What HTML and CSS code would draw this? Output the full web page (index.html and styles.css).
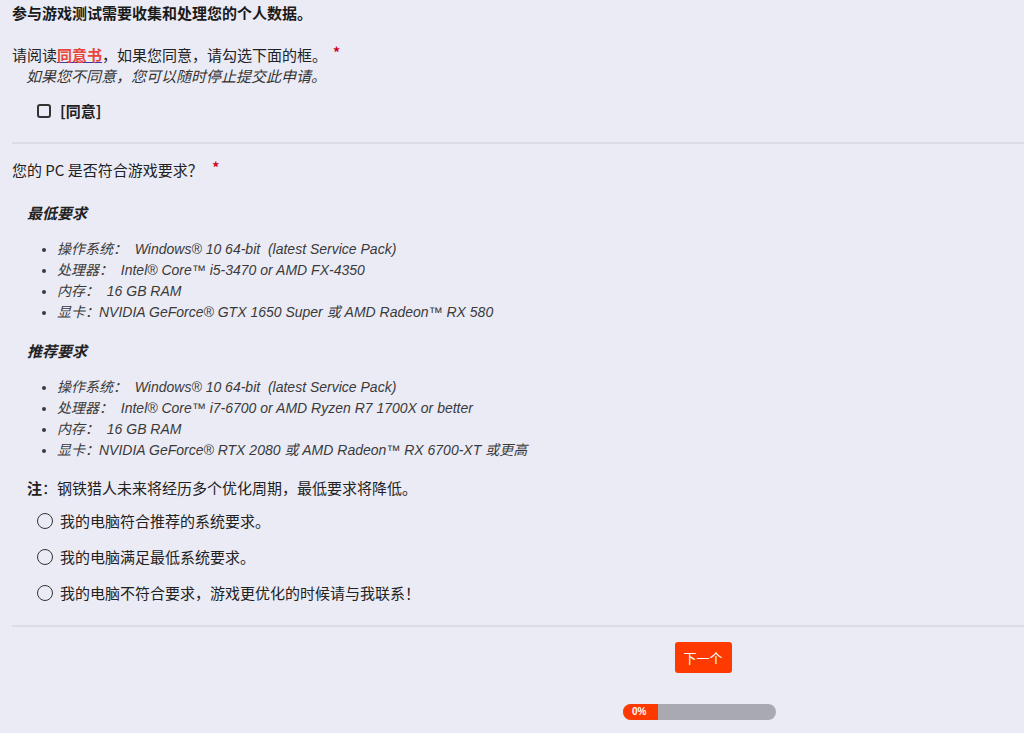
FILE: index.html
```html
<!DOCTYPE html>
<html lang="zh-CN">
  <head>
    <meta charset="UTF-8">
    <title>游戏测试申请</title>
    <link rel="stylesheet" href="styles.css">
  </head>
  <body>
    <div class="section">
      <h2 class="title">参与游戏测试需要收集和处理您的个人数据。</h2>

      <p class="question">请阅读<a href="#" class="consent-link">同意书</a>，如果您同意，请勾选下面的框。<span class="req">*</span></p>
      <p class="hint">如果您不同意，您可以随时停止提交此申请。</p>

      <label class="check-row">
        <span class="box"></span>
        <span class="check-label">[同意]</span>
      </label>
    </div>

    <div class="section">
      <p class="question q2">您的 PC 是否符合游戏要求？ <span class="req">*</span></p>

      <div class="specs">
        <h3>最低要求</h3>
        <ul>
          <li>操作系统：&nbsp; Windows® 10 64-bit &nbsp;(latest Service Pack)</li>
          <li>处理器：&nbsp; Intel® Core™ i5-3470 or AMD FX-4350</li>
          <li>内存：&nbsp; 16 GB RAM</li>
          <li>显卡：NVIDIA GeForce® GTX 1650 Super 或 AMD Radeon™ RX 580</li>
        </ul>

        <h3 class="rec">推荐要求</h3>
        <ul>
          <li>操作系统：&nbsp; Windows® 10 64-bit &nbsp;(latest Service Pack)</li>
          <li>处理器：&nbsp; Intel® Core™ i7-6700 or AMD Ryzen R7 1700X or better</li>
          <li>内存：&nbsp; 16 GB RAM</li>
          <li>显卡：NVIDIA GeForce® RTX 2080 或 AMD Radeon™ RX 6700-XT 或更高</li>
        </ul>

        <p class="note"><strong>注</strong>：钢铁猎人未来将经历多个优化周期，最低要求将降低。</p>
      </div>

      <div class="options">
        <label class="radio-row"><span class="circle"></span>我的电脑符合推荐的系统要求。</label>
        <label class="radio-row"><span class="circle"></span>我的电脑满足最低系统要求。</label>
        <label class="radio-row"><span class="circle"></span>我的电脑不符合要求，游戏更优化的时候请与我联系！</label>
      </div>
    </div>

    <div class="footer">
      <button class="next-btn">下一个</button>
      <div class="progress">
        <div class="progress-fill">0%</div>
      </div>
    </div>
  </body>
</html>
```

FILE: styles.css
```css
body {
  margin: 0;
  padding: 0 0 0 12px;
  background-color: #ebebf5;
  color: #222;
  font-family: "Noto Sans CJK SC", "Liberation Sans", sans-serif;
  font-size: 15px;
}
.section {
  border-bottom: 2px solid #dcdce6;
}
.title {
  margin: 0;
  padding-top: 2px;
  font-size: 15px;
  line-height: 22px;
  font-weight: bold;
  color: #1a1a1a;
}
.question {
  margin: 20px 0 0;
  line-height: 22px;
}
.q2 {
  margin-top: 15px;
}
.consent-link {
  color: #e8453c;
  font-weight: bold;
  text-decoration: underline;
  text-decoration-color: #3a3aa8;
}
.req {
  color: #d0021b;
  margin-left: 6px;
  font-size: 14px;
  font-weight: bold;
  position: relative;
  top: -3px;
}
.hint {
  margin: 0;
  padding-left: 14px;
  font-style: italic;
  line-height: 20px;
  color: #333;
}
.check-row {
  display: flex;
  align-items: center;
  gap: 9px;
  height: 22px;
  margin: 13px 0 0 25px;
  padding-bottom: 21px;
}
.box {
  width: 10px;
  height: 10px;
  margin-top: 2px;
  border: 2px solid #333;
  border-radius: 3px;
}
.check-label {
  font-weight: bold;
}
.specs {
  padding-left: 15px;
}
.specs h3 {
  margin: 21px 0 0;
  font-size: 15px;
  font-style: italic;
  font-weight: bold;
  line-height: 22px;
}
.specs .rec {
  margin-top: 17px;
}
.specs ul {
  margin: 15px 0 0;
  padding-left: 30px;
  font-style: italic;
  color: #3a3a3a;
  font-family: "Liberation Sans", "Noto Sans CJK SC", sans-serif;
  font-size: 14px;
}
.specs li {
  line-height: 21px;
}
.note {
  margin: 16px 0 0;
  line-height: 22px;
}
.options {
  display: flex;
  flex-direction: column;
  gap: 14px;
  margin: 10px 0 0 25px;
  padding-bottom: 22px;
}
.radio-row {
  display: flex;
  align-items: center;
  gap: 7px;
  height: 22px;
}
.circle {
  flex: none;
  width: 14px;
  height: 14px;
  margin-top: 2px;
  border: 1.5px solid #333;
  border-radius: 50%;
}
.footer {
  display: flex;
  flex-direction: column;
  align-items: center;
  padding: 15px 0 0 0;
}
.next-btn {
  margin-left: 370px;
  background-color: #ff3a00;
  color: #fff;
  border: none;
  border-radius: 3px;
  width: 57px;
  height: 31px;
  font-family: "Noto Sans CJK SC", sans-serif;
  font-size: 13px;
}
.progress {
  margin-top: 31px;
  margin-left: 363px;
  width: 153px;
  height: 16px;
  border-radius: 8px;
  background-color: #a9a9b2;
  overflow: hidden;
}
.progress-fill {
  width: 35px;
  height: 16px;
  background-color: #ff3a00;
  color: #fff;
  font-size: 10px;
  font-weight: bold;
  line-height: 16px;
  padding-left: 9px;
  box-sizing: border-box;
  font-family: "Liberation Sans", sans-serif;
}
```
